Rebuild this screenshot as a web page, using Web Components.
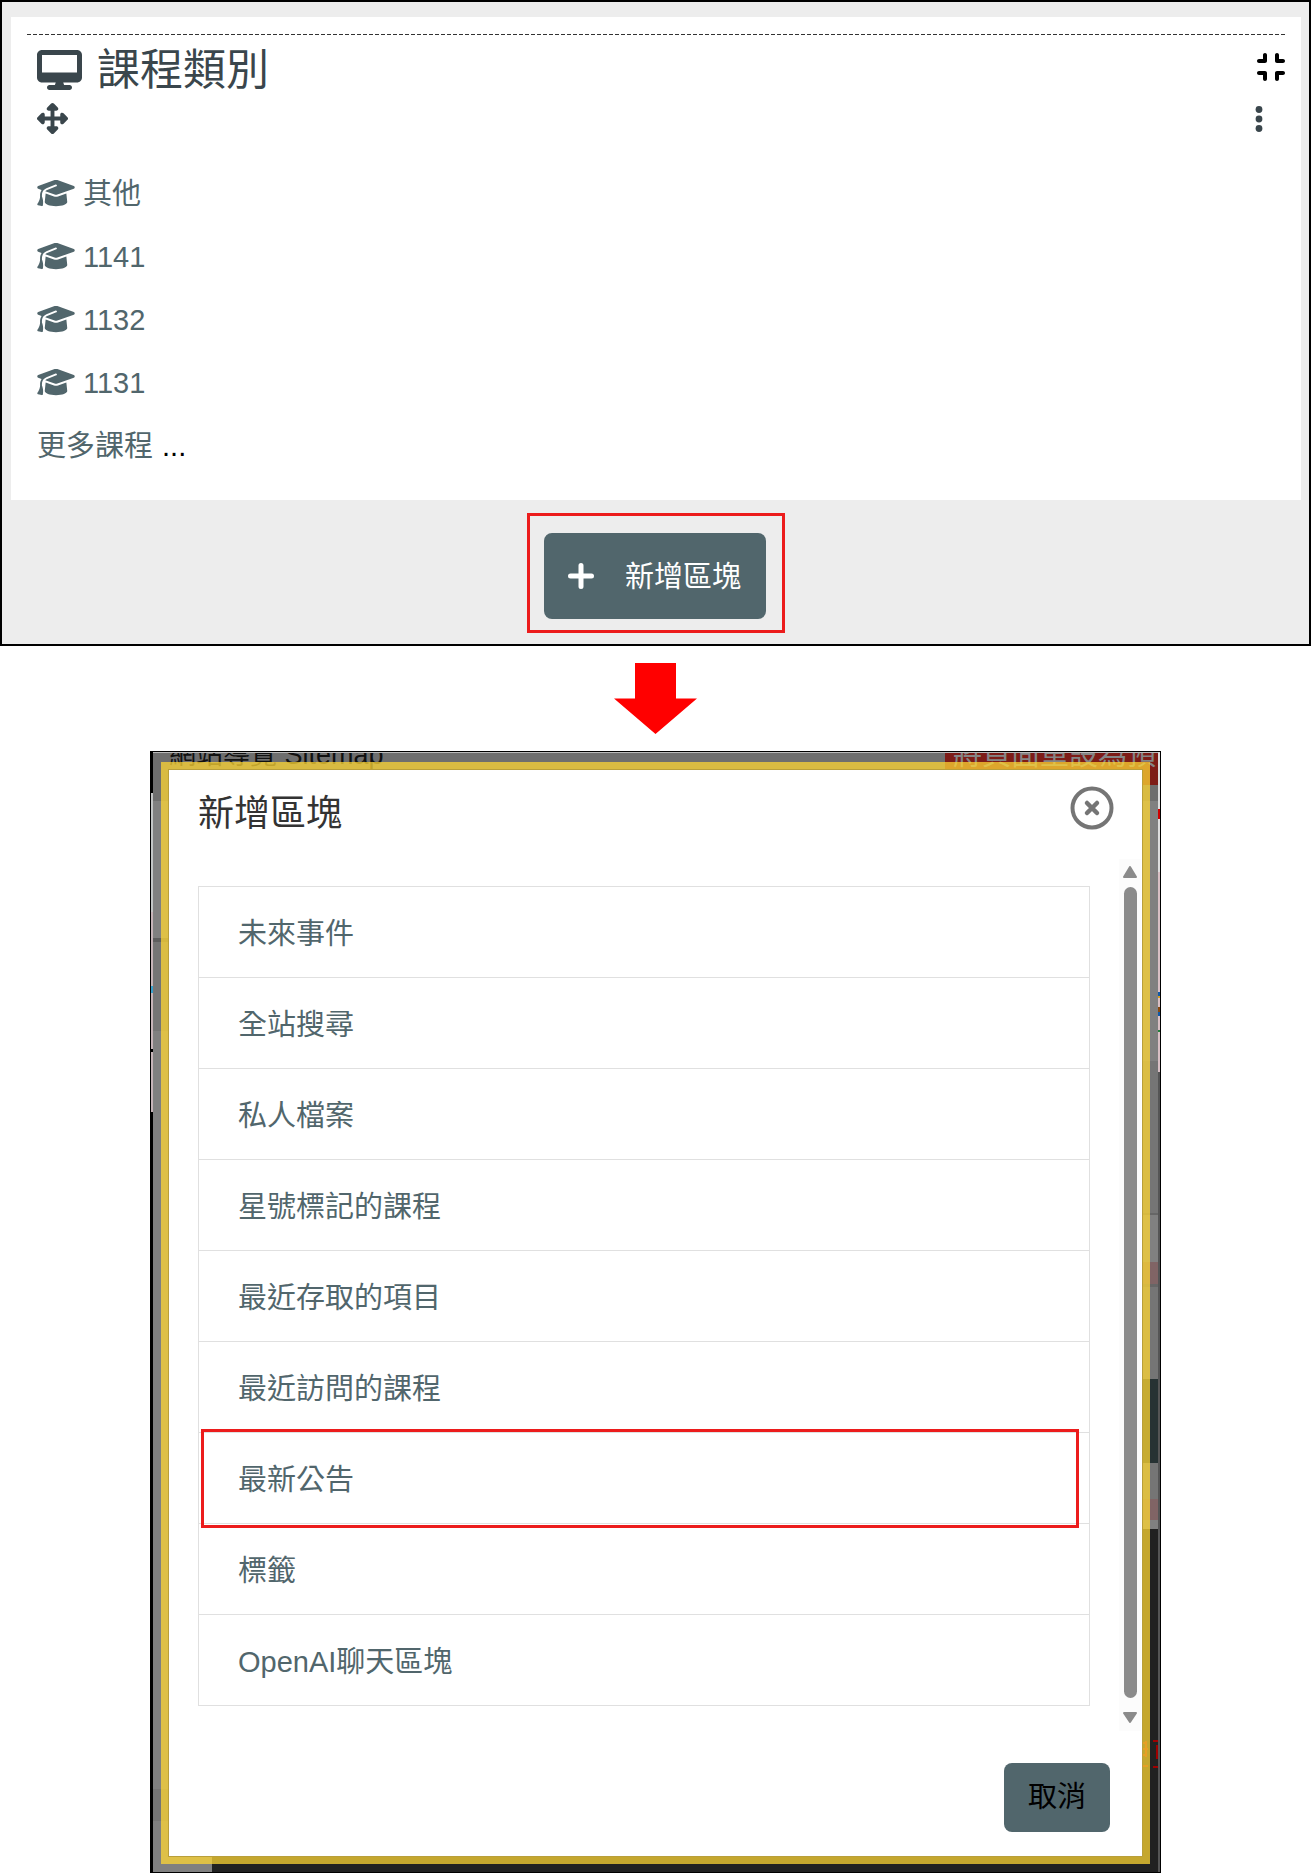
<!DOCTYPE html>
<html lang="zh-Hant">
<head>
<meta charset="utf-8">
<title>新增區塊</title>
<style>
body {
    margin: 0;
    background: #fff;
    color: #000;
    font-family: "Liberation Sans", "Noto Sans CJK TC", sans-serif;
    font-size: 29px;
    line-height: 43px;
    --teal: #51666c;
    --ink: #3a464c;
    --mark: #ec1c1c;
}
</style>
</head>
<body>

<block-region>
    <course-block heading="課程類別">
        <course-link>其他</course-link>
        <course-link>1141</course-link>
        <course-link>1132</course-link>
        <course-link>1131</course-link>
        <a slot="more" href="#courses">更多課程</a>
    </course-block>
    <add-block-button slot="footer">新增區塊</add-block-button>
</block-region>

<step-arrow></step-arrow>

<page-backdrop>
    <block-modal heading="新增區塊">
        <block-option>未來事件</block-option>
        <block-option>全站搜尋</block-option>
        <block-option>私人檔案</block-option>
        <block-option>星號標記的課程</block-option>
        <block-option>最近存取的項目</block-option>
        <block-option>最近訪問的課程</block-option>
        <block-option marked>最新公告</block-option>
        <block-option>標籤</block-option>
        <block-option>OpenAI聊天區塊</block-option>
    </block-modal>
</page-backdrop>

<script>
// shared helper: open shadow root with the given markup
class BaseElement extends HTMLElement {
    constructor() {
        super();
        const root = this.attachShadow({ mode: 'open' });
        const template = document.createElement('template');
        template.innerHTML = this.constructor.markup;
        root.appendChild(template.content.cloneNode(true));
    }

    $(selector) {
        return this.shadowRoot.querySelector(selector);
    }

    connectedCallback() {
        const heading = this.$('.heading');
        if (heading) {
            heading.textContent = this.getAttribute('heading');
        }
    }
}

customElements.define('block-region', class extends BaseElement {
    static markup = `
<style>
:host {
    display: block;
    border: 2px solid #000;
    background: #ededed;
    padding: 15px 8px 11px 9px;
}
.footer {
    display: flex;
    justify-content: center;
    padding-top: 13px;
}
</style>
<slot></slot>
<div class="footer"><slot name="footer"></slot></div>
`;
});

customElements.define('course-block', class extends BaseElement {
    static markup = `
<style>
:host {
    display: block;
    background: #fff;
    padding: 17px 16px 24px;
}
.rule {
    height: 1px;
    background: repeating-linear-gradient(90deg, #333 0 4px, transparent 4px 6px);
}
.row {
    display: flex;
    align-items: center;
    justify-content: space-between;
    padding-left: 10px;
}
.top {
    height: 69px;
}
.tools {
    height: 29px;
    padding-right: 22px;
    margin-bottom: 28px;
}
.title {
    display: flex;
    align-items: center;
    gap: 15px;
    color: var(--ink);
}
h2 {
    margin: 0;
    font-size: 43px;
    line-height: 64px;
    font-weight: 400;
}
button {
    display: flex;
    border: 0;
    padding: 0;
    background: none;
    color: var(--ink);
    cursor: pointer;
}
button.compress {
    padding-bottom: 5px;
    color: #000;
}
svg {
    display: block;
    fill: currentColor;
}
nav {
    padding-left: 10px;
}
.more {
    display: flex;
    align-items: center;
    gap: 9px;
    height: 59px;
    padding-top: 4px;
}
::slotted(a) {
    color: var(--teal);
    text-decoration: none;
}
</style>
<div class="rule"></div>
<div class="row top">
    <div class="title">
        <svg width="45" height="40" viewBox="0 0 576 512"><path d="M64 0C28.700 0 0 28.700 0 64V352c0 35.300 28.700 64 64 64H240l-10.700 32H160c-17.700 0-32 14.300-32 32s14.300 32 32 32H416c17.700 0 32-14.300 32-32s-14.300-32-32-32H346.700L336 416H512c35.300 0 64-28.700 64-64V64c0-35.300-28.700-64-64-64H64zM512 64V288H64V64H512z"/></svg>
        <h2 class="heading"></h2>
    </div>
    <button class="compress" type="button" aria-label="收合">
        <svg width="28" height="32" viewBox="0 0 448 512"><path d="M160 64c0-17.700-14.300-32-32-32s-32 14.300-32 32v64H32c-17.700 0-32 14.300-32 32s14.300 32 32 32h96c17.700 0 32-14.300 32-32V64zM32 320c-17.700 0-32 14.300-32 32s14.300 32 32 32H96v64c0 17.700 14.300 32 32 32s32-14.300 32-32V352c0-17.700-14.300-32-32-32H32zM352 64c0-17.700-14.300-32-32-32s-32 14.300-32 32v96c0 17.700 14.300 32 32 32h96c17.700 0 32-14.300 32-32s-14.300-32-32-32H352V64zM320 320c-17.700 0-32 14.300-32 32v96c0 17.700 14.300 32 32 32s32-14.300 32-32V384h64c17.700 0 32-14.300 32-32s-14.300-32-32-32H320z"/></svg>
    </button>
</div>
<div class="row tools">
    <button type="button" aria-label="移動">
        <svg width="31" height="31" viewBox="0 0 512 512"><path d="M278.600 9.400c-12.500-12.500-32.800-12.500-45.300 0l-64 64c-9.200 9.200-11.900 22.900-6.900 34.900s16.600 19.800 29.600 19.800h32v96H128V192c0-12.900-7.800-24.600-19.800-29.600s-25.700-2.200-34.900 6.900l-64 64c-12.500 12.500-12.500 32.800 0 45.300l64 64c9.200 9.200 22.900 11.900 34.900 6.900s19.800-16.600 19.800-29.600V288h96v96H192c-12.900 0-24.600 7.800-29.600 19.800s-2.200 25.700 6.900 34.900l64 64c12.500 12.500 32.800 12.500 45.300 0l64-64c9.200-9.200 11.900-22.900 6.900-34.900s-16.600-19.800-29.600-19.800H288V288h96v32c0 12.900 7.800 24.600 19.800 29.600s25.700 2.200 34.900-6.900l64-64c12.500-12.500 12.500-32.800 0-45.300l-64-64c-9.200-9.200-22.900-11.900-34.900-6.900s-19.800 16.600-19.800 29.600v32H288V128h32c12.900 0 24.600-7.800 29.600-19.800s2.200-25.700-6.900-34.900l-64-64z"/></svg>
    </button>
    <button type="button" aria-label="動作選單">
        <svg width="8" height="28" viewBox="0 0 8 28"><circle cx="4" cy="4.500" r="3.400"/><circle cx="4" cy="14" r="3.400"/><circle cx="4" cy="23.500" r="3.400"/></svg>
    </button>
</div>
<nav>
    <slot></slot>
    <div class="more"><slot name="more"></slot><span>...</span></div>
</nav>
`;
});

customElements.define('course-link', class extends BaseElement {
    static markup = `
<style>
:host {
    display: flex;
    align-items: center;
    height: 63px;
}
a {
    display: flex;
    align-items: center;
    gap: 8px;
    color: var(--teal);
    text-decoration: none;
}
svg {
    fill: currentColor;
}
span {
    padding-top: 4px;
}
</style>
<a href="#course">
    <svg width="38" height="30" viewBox="0 0 640 512"><path d="M320 32c-8.100 0-16.100 1.400-23.700 4.100L15.800 137.400C6.300 140.900 0 149.900 0 160s6.300 19.100 15.800 22.600l57.900 20.900C57.300 229.300 48 259.800 48 291.900v28.100c0 28.400-10.800 57.700-22.300 80.800c-6.500 13-13.900 25.800-22.500 37.600C0 442.700-.9 448.300 .9 453.400s6 8.900 11.200 10.200l64 16c4.200 1.100 8.700 .3 12.400-2s6.300-6.100 7.100-10.400c8.600-42.800 4.300-81.200-2.100-108.700C90.300 344.300 86 329.800 80 316.500V291.900c0-30.200 10.200-58.700 27.900-81.500c12.900-15.500 29.600-28 49.200-35.700l157-61.700c8.200-3.200 17.500 .8 20.700 9s-.8 17.500-9 20.700l-157 61.700c-12.400 4.900-23.300 12.400-32.200 21.600l159.600 57.600c7.600 2.700 15.600 4.100 23.700 4.100s16.100-1.400 23.700-4.100L624.200 182.600c9.500-3.400 15.800-12.500 15.800-22.600s-6.300-19.100-15.800-22.600L343.700 36.100C336.100 33.400 328.100 32 320 32zM128 408c0 35.300 86 72 192 72s192-36.700 192-72L496.700 262.600 354.500 314c-11.100 4-22.800 6-34.500 6s-23.500-2-34.500-6L143.300 262.600 128 408z"/></svg>
    <span><slot></slot></span>
</a>
`;
});

customElements.define('add-block-button', class extends BaseElement {
    static markup = `
<style>
:host {
    display: block;
    border: 3px solid var(--mark);
    padding: 17px 16px 11px 14px;
}
button {
    display: flex;
    align-items: center;
    gap: 31px;
    height: 86px;
    padding: 0 25px 0 24px;
    border: 0;
    border-radius: 8px;
    background: var(--teal);
    color: #fff;
    font: inherit;
    cursor: pointer;
}
svg {
    fill: none;
    stroke: currentColor;
    stroke-width: 5;
    stroke-linecap: round;
}
span {
    padding-top: 2px;
}
</style>
<button type="button">
    <svg width="26" height="26" viewBox="0 0 26 26"><path d="M13 2.500v21M2.500 13h21"/></svg>
    <span><slot></slot></span>
</button>
`;
});

customElements.define('step-arrow', class extends BaseElement {
    static markup = `
<style>
:host {
    display: flex;
    justify-content: center;
    padding: 17px 0;
}
svg {
    display: block;
}
</style>
<svg width="83" height="71" viewBox="0 0 83 71"><path fill="#f00" d="M21 0h41v35.500h21L41.500 71 0 35.500h21z"/></svg>
`;
});

// dimmed page behind the modal; both share one grid cell
customElements.define('page-backdrop', class extends BaseElement {
    static markup = `
<style>
:host {
    display: grid;
    grid-template-columns: minmax(0, 1fr);
    margin: 0 150px;
    border: 1px solid #000;
    border-bottom-width: 2px;
    overflow: hidden;
}
.page, .modal {
    grid-area: 1 / 1;
    min-width: 0;
}
.page {
    display: grid;
    grid-template-columns: 2px 59px minmax(0, 1fr) 17px 2px;
    grid-template-rows: 49px minmax(0, 1fr) 16px;
    background: #212121;
}
.edge-left {
    grid-area: 1 / 1 / 4 / 2;
    background: linear-gradient(#000 0 41px, #c3c5c5 41px 160px, #c6b4b8 160px 234px, #3aa0cc 234px 241px, #c6b4b8 241px 297px, #000 297px 300px, #c6b4b8 300px 360px, #000 360px);
}
.edge-right {
    grid-area: 1 / 5 / 4 / 6;
    background: linear-gradient(#ddd 0 57px, #d00000 57px 67px, #ddd 67px 120px, #d8bfc4 120px 240px, #1059a8 240px 244px, #d8a020 244px 246px, #d8bfc4 246px 255px, #8a4a10 255px 260px, #1059a8 260px 264px, #d8bfc4 264px 278px, #20803a 278px 280px, #d8bfc4 280px 320px, #555 320px);
}
.head {
    grid-area: 1 / 2 / 2 / 5;
    display: flex;
    justify-content: space-between;
    background: #6e6e6e;
    border-top: 1px solid #bbb;
    white-space: nowrap;
    overflow: hidden;
}
.head span {
    height: 32px;
    overflow: hidden;
}
.site {
    padding-left: 16px;
    font-size: 27px;
    line-height: 4px;
    color: #111;
}
.reset {
    width: 205px;
    padding-left: 8px;
    background: #7d1c17;
    color: #858585;
    line-height: 4px;
}
.left {
    grid-area: 2 / 2 / 4 / 3;
    background: linear-gradient(#808080 0 137px, #5e5e5e 137px 141px, #757575 141px 230px, #808080 230px 988px, #757575 988px 1020px, #808080 1020px);
}
.right {
    grid-area: 2 / 4 / 4 / 5;
    display: flex;
    align-items: flex-end;
    padding-bottom: 104px;
    background: linear-gradient(#808080 0 260px, #757575 260px 412px, #666 412px 414px, #808080 414px 461px, #806465 461px 483px, #666 483px 486px, #757575 486px 578px, #273233 578px 662px, #757575 662px 698px, #806465 698px 719px, #808080 719px 728px, #212121 728px);
}
.right svg {
    fill: none;
    stroke: #a00000;
    stroke-width: 2;
}
</style>
<div class="page">
    <div class="edge-left"></div>
    <div class="head">
        <span class="site">網站導覽 Sitemap</span>
        <span class="reset">將頁面重設為預</span>
    </div>
    <div class="left"></div>
    <div class="right">
        <svg width="17" height="28" viewBox="0 0 17 28"><path d="M1 3h5M1 9h6M1 15h5M1 20v6h6M5 1v16M12 1h5M12 27h5M16 5v14"/></svg>
    </div>
    <div class="edge-right"></div>
</div>
<div class="modal"><slot></slot></div>
`;
});

customElements.define('block-modal', class extends BaseElement {
    static markup = `
<style>
:host {
    display: block;
    margin: 10px 10px 8px;
    border: 7px solid rgba(255, 214, 51, .74);
    padding: 1px;
    background: #fff;
    background-clip: padding-box;
    box-shadow: inset 0 0 0 1px #b99f3a;
}
header {
    display: flex;
    align-items: center;
    justify-content: space-between;
    height: 89px;
    padding: 0 28px 0 29px;
}
h3 {
    margin: 0;
    padding-bottom: 2px;
    font-size: 36px;
    line-height: 54px;
    font-weight: 400;
    color: #333;
}
.close {
    border: 0;
    padding: 0 0 14px;
    background: none;
    cursor: pointer;
}
.close svg {
    display: block;
    fill: none;
    stroke: #757575;
    stroke-width: 4;
    stroke-linecap: round;
}
.body {
    display: flex;
    align-items: flex-start;
    padding: 0 1px 0 29px;
}
.list {
    flex: 1;
    margin-top: 27px;
    border: 1px solid #e0e0e0;
    border-bottom: 0;
}
.scroll {
    align-self: stretch;
    display: flex;
    flex-direction: column;
    align-items: center;
    width: 22px;
    margin-left: 29px;
    margin-bottom: -25px;
    padding: 7px 0;
    background: #fcfcfc;
}
.thumb {
    flex: 1;
    width: 13px;
    margin: 9px 0 14px;
    border-radius: 7px;
    background: #8b8b8b;
}
.scroll svg {
    fill: #8b8b8b;
    stroke: #8b8b8b;
    stroke-width: 2;
    stroke-linejoin: round;
}
footer {
    display: flex;
    justify-content: flex-end;
    padding: 57px 32px 24px;
}
.cancel {
    height: 69px;
    padding: 0 24px;
    border: 0;
    border-radius: 8px;
    background: var(--teal);
    color: #000;
    font: inherit;
    cursor: pointer;
}
</style>
<header>
    <h3 class="heading"></h3>
    <button class="close" type="button" aria-label="關閉">
        <svg width="44" height="44" viewBox="0 0 44 44"><circle cx="22" cy="22" r="19.500"/><path stroke-width="4.500" d="M17 17l10 10M27 17l-10 10"/></svg>
    </button>
</header>
<div class="body">
    <div class="list"><slot></slot></div>
    <div class="scroll" aria-hidden="true">
        <svg width="16" height="12" viewBox="0 0 16 12"><path d="M8 1l6 10H2z"/></svg>
        <div class="thumb"></div>
        <svg width="16" height="12" viewBox="0 0 16 12"><path d="M2 1h12l-6 9z"/></svg>
    </div>
</div>
<footer><button class="cancel" type="button">取消</button></footer>
`;
});

customElements.define('block-option', class extends BaseElement {
    static markup = `
<style>
:host {
    display: block;
    position: relative;
    border-bottom: 1px solid #e0e0e0;
}
a {
    display: block;
    padding: 26px 39px 21px;
    color: var(--teal);
    text-decoration: none;
}
/* callout frame over the row */
:host([marked])::after {
    content: "";
    position: absolute;
    inset: -4px 10px -5px 2px;
    border: 3px solid var(--mark);
    pointer-events: none;
}
</style>
<a href="#add"><slot></slot></a>
`;
});
</script>
</body>
</html>
